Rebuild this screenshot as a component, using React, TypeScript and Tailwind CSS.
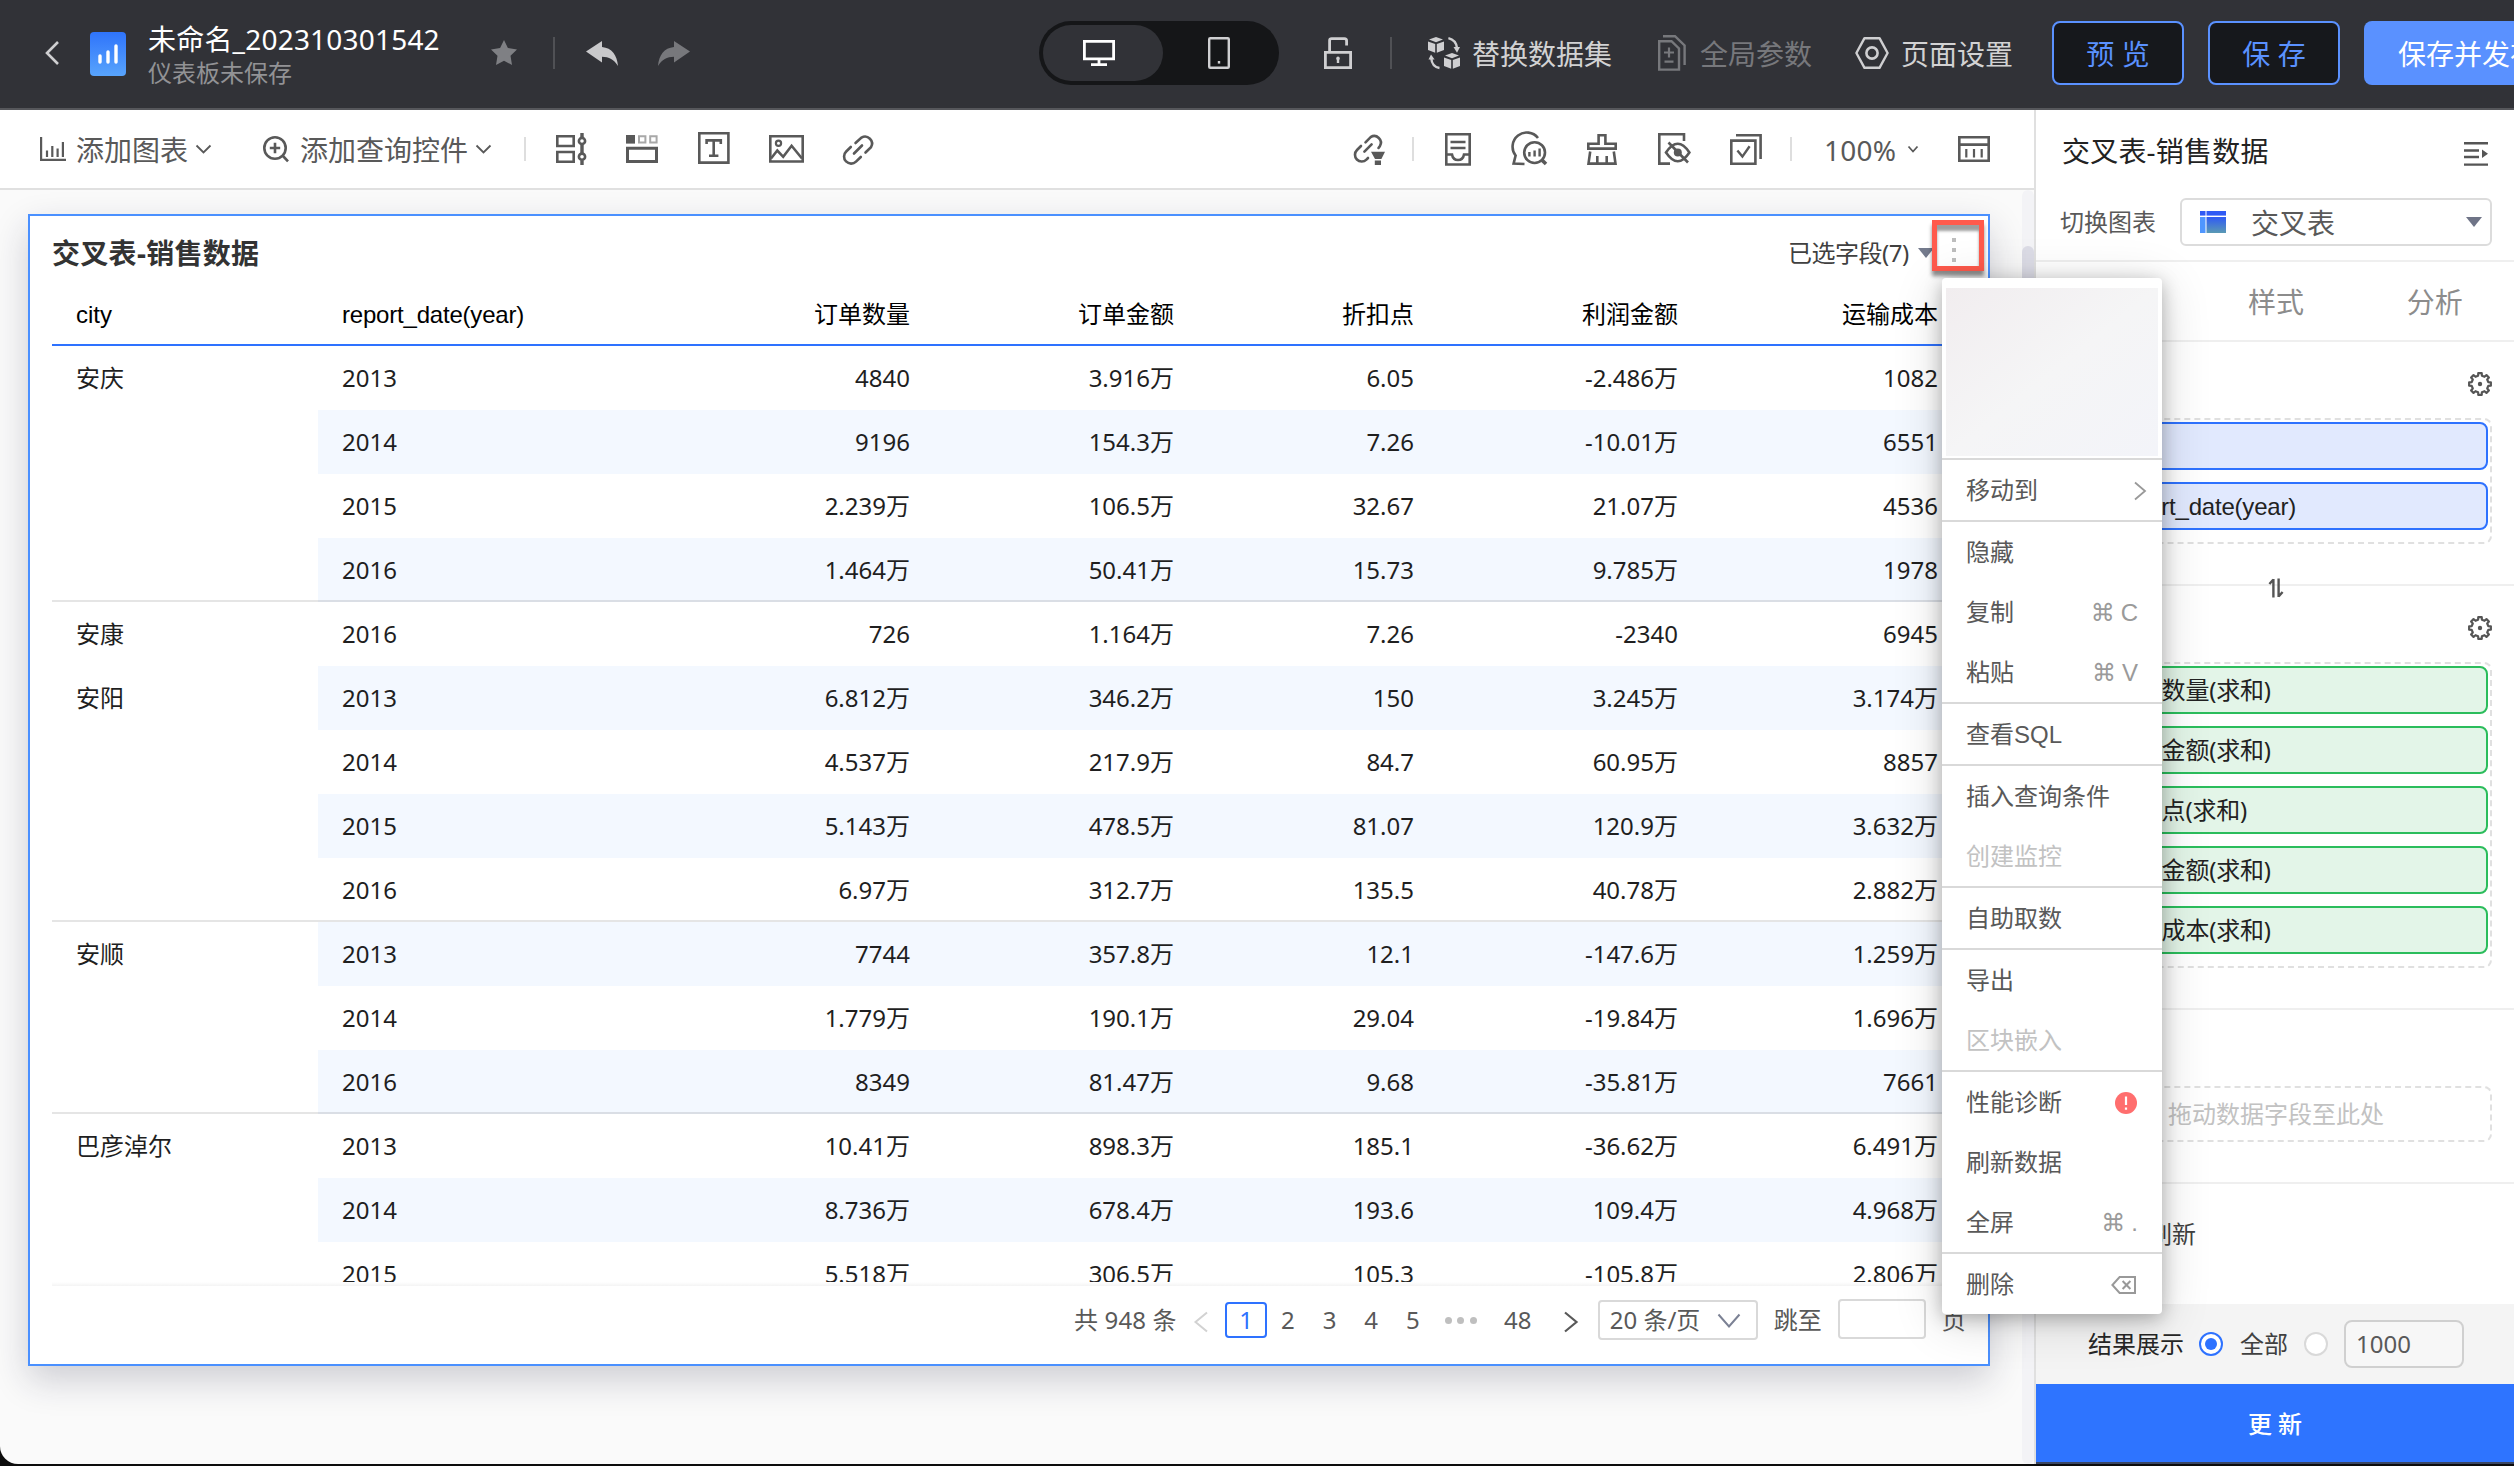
import React from "react";

type SvgProps = { w: number; h: number; sw?: number; className?: string; children: React.ReactNode };

function Svg({ w, h, sw = 2.6, className = "", children }: SvgProps) {
  return (
    <svg
      width={w}
      height={h}
      viewBox={`0 0 ${w} ${h}`}
      fill="none"
      stroke="currentColor"
      strokeWidth={sw}
      className={`block shrink-0 overflow-visible ${className}`}
    >
      {children}
    </svg>
  );
}

const ChevronDown = ({ w, h, sw = 1.8, className }: { w: number; h: number; sw?: number; className?: string }) => (
  <Svg w={w} h={h} sw={sw} className={className}>
    <path d={`M0.5 0.5 L${w / 2} ${h - 0.5} L${w - 0.5} 0.5`} />
  </Svg>
);

const LinkShape = () => (
  <g strokeLinecap="round">
    <path d="M12.5 9 L18.5 3.6 A7 7 0 0 1 28 13.2 L22.5 18.5" />
    <path d="M7.8 13 L3.2 17.5 A7 7 0 0 0 13 27.6 L17.8 23" />
    <path d="M11 19.5 L19 11.5" />
  </g>
);

function Header() {
  return (
    <header className="flex h-[110px] shrink-0 items-center overflow-hidden border-b-2 border-[#56575b] bg-[#313237] text-[28px] leading-[36px] text-[#d2d2d3]">
      <Svg w={14} h={24} sw={2.6} className="mt-[-2px] ml-[45px] text-[#cfcfd1]">
        <path d="M13 1 L2 12 L13 23" />
      </Svg>
      <svg width="36" height="44" viewBox="0 0 36 44" className="ml-[31px] mt-[-1px] block shrink-0">
        <defs>
          <linearGradient id="logo" x1="0" y1="0" x2="0" y2="1">
            <stop offset="0" stopColor="#2f74fb" />
            <stop offset="1" stopColor="#58a4fc" />
          </linearGradient>
        </defs>
        <rect width="36" height="44" rx="4" fill="url(#logo)" />
        <g stroke="#fff" strokeWidth="3.4" strokeLinecap="round">
          <path d="M10 24 V30" />
          <path d="M18 20 V30" />
          <path d="M26 14 V30" />
        </g>
      </svg>
      <div className="ml-[22px] flex w-[320px] shrink-0 flex-col pt-[1px]">
        <div className="text-[28px] leading-[36px] tracking-[0.2px] whitespace-nowrap text-white">未命名_202310301542</div>
        <div className="text-[24px] leading-[32px] whitespace-nowrap text-[#929295]">仪表板未保存</div>
      </div>
      <Svg w={26} h={25} sw={0} className="mt-[-3px] ml-[23px] text-[#7f8084]">
        <path
          fill="currentColor"
          d="M13 0 L16.9 8 L26 9.4 L19.5 15.8 L21 25 L13 20.7 L5 25 L6.5 15.8 L0 9.4 L9.1 8 Z"
        />
      </Svg>
      <div className="mt-[-2px] ml-[36px] h-8 w-[2px] shrink-0 bg-[#505155]" />
      <Svg w={32} h={25} sw={0} className="mt-[-2px] ml-[31px] text-[#c9c9cb]">
        <path fill="currentColor" d="M0 10.5 L16 0 V6 C26 7 31 14 32 25 C28 18.5 23 16 16 15.8 V21.5 Z" />
      </Svg>
      <Svg w={32} h={25} sw={0} className="mt-[-2px] ml-[40px] text-[#77787c]">
        <path fill="currentColor" d="M32 10.5 L16 0 V6 C6 7 1 14 0 25 C4 18.5 9 16 16 15.8 V21.5 Z" />
      </Svg>
      <div className="mt-[-2px] ml-[349px] flex h-16 w-[240px] shrink-0 items-center rounded-full bg-[#151618] p-1">
        <div className="flex h-14 w-[120px] items-center justify-center rounded-full bg-[#313237] pr-[9px] text-white">
          <Svg w={32} h={26} sw={2.8}>
            <path d="M1.4 1.4 H30.6 V18.8 H1.4 Z M16 19 V24.5 M8 24.6 H24" />
          </Svg>
        </div>
        <div className="flex h-14 w-[112px] items-center justify-center text-[#cfcfd1]">
          <Svg w={22} h={32} sw={2.4}>
            <rect x="1.2" y="1.2" width="19.6" height="29.6" rx="1" />
            <path d="M11 24 V26.6" />
          </Svg>
        </div>
      </div>
      <Svg w={28} h={32} sw={2.8} className="mt-[-2px] ml-[45px] text-[#cfcfd1]">
        <path d="M1.4 15.4 H26.6 V30.6 H1.4 Z M5.6 15 V3.6 Q5.6 1.6 7.6 1.6 H20.4 Q22.6 1.6 22.6 3.8 V8.5" />
        <path d="M14 21 V26" strokeWidth="2.4" />
        <circle cx="14" cy="21.4" r="1" strokeWidth="1.6" />
      </Svg>
      <div className="mt-[-2px] ml-[38px] h-8 w-[2px] shrink-0 bg-[#505155]" />
      <Svg w={32} h={32} sw={2.4} className="mt-[-2px] ml-[36px] text-[#cfcfd1]">
        <g fill="currentColor" stroke="none">
          <path d="M8 0 L15 2.6 L8 5.2 L1 2.6 Z" />
          <path d="M0 4.4 L7.2 7 V15.8 L0 13 Z" />
          <path d="M16 4.4 L8.8 7 V15.8 L16 13 Z" />
          <path d="M24 16 L31 18.6 L24 21.2 L17 18.6 Z" />
          <path d="M16 20.4 L23.2 23 V31.8 L16 29 Z" />
          <path d="M32 20.4 L24.8 23 V31.8 L32 29 Z" />
          <path d="M25.5 10 H32 L29 15.8 Z" />
          <path d="M0.5 22.5 H6.6 L3 17.5 Z" />
        </g>
        <path d="M20.4 1.2 Q28 3 29 11" />
        <path d="M3.2 21 Q4 30 11.5 31" />
      </Svg>
      <div className="mt-[-1px] ml-[12px] w-[140px] shrink-0 whitespace-nowrap">替换数据集</div>
      <Svg w={28} h={36} sw={2.4} className="mt-[-2px] ml-[46px] text-[#77787c]">
        <path d="M1.2 6.2 H13.5 L21 13.5 V34.6 H1.2 Z M5 1.2 H17 L26.6 10.5 V30" />
        <path d="M6 17.5 H16 M11 12.5 V22.5 M6.5 26.6 H15.5" strokeWidth="2.2" />
      </Svg>
      <div className="mt-[-1px] ml-[14px] w-[112px] shrink-0 whitespace-nowrap text-[#77787c]">全局参数</div>
      <Svg w={34} h={32} sw={2.4} className="mt-[-2px] ml-[43px] text-[#cfcfd1]">
        <path d="M9.5 1.2 H24.5 L32.6 16 L24.5 30.8 H9.5 L1.4 16 Z" strokeLinejoin="round" />
        <circle cx="17" cy="16" r="5.6" strokeWidth="2.6" />
      </Svg>
      <div className="mt-[-1px] ml-[12px] w-[112px] shrink-0 whitespace-nowrap">页面设置</div>
      <button className="mt-[-2px] ml-[39px] flex h-16 w-[132px] shrink-0 items-center justify-center rounded-[8px] border-2 border-[#5a91ff] bg-[#16181c] pt-[1px] whitespace-pre text-[#5a91ff]">
        预 览
      </button>
      <button className="mt-[-2px] ml-[24px] flex h-16 w-[132px] shrink-0 items-center justify-center rounded-[8px] border-2 border-[#5a91ff] bg-[#16181c] pt-[1px] whitespace-pre text-[#5a91ff]">
        保 存
      </button>
      <button className="mt-[-2px] ml-[24px] flex h-16 w-[208px] shrink-0 items-center justify-center rounded-[8px] bg-[#5a91ff] pt-[1px] whitespace-nowrap text-white">
        保存并发布
      </button>
    </header>
  );
}

function Toolbar() {
  return (
    <div className="flex h-[80px] shrink-0 items-center border-b-2 border-[#e0e0e0] bg-white text-[28px] leading-[36px] text-[#595959]">
      <Svg w={26} h={24} sw={2.2} className="ml-[40px]">
        <path d="M1.1 0 V22.9 H26 M7 20 V13.5 M12.3 20 V9 M17.6 20 V11.5 M22.9 20 V5" />
      </Svg>
      <div className="mt-[1px] ml-[10px] w-[112px] shrink-0 whitespace-nowrap">添加图表</div>
      <ChevronDown w={15} h={8} className="ml-[8px]" />
      <Svg w={26} h={27} sw={2.6} className="ml-[52px]">
        <circle cx="12" cy="12" r="10.7" />
        <path d="M12 6.8 V17.2 M6.8 12 H17.2 M19.5 19.5 L25 25.4" />
      </Svg>
      <div className="mt-[1px] ml-[11px] w-[168px] shrink-0 whitespace-nowrap">添加查询控件</div>
      <ChevronDown w={15} h={8} className="ml-[8px]" />
      <div className="ml-[33px] h-6 w-[2px] shrink-0 bg-[#dedede]" />
      <Svg w={30} h={32} className="ml-[30px]">
        <path d="M1.3 3.3 H17.7 V13 H1.3 Z M1.3 19 H17.7 V28.8 H1.3 Z" />
        <path d="M26 0 V4.5 M26 12 V20 M26 27.5 V32" strokeWidth="3.4" />
        <circle cx="26" cy="8" r="3.1" />
        <circle cx="26" cy="23.7" r="3.1" />
      </Svg>
      <Svg w={32} h={28} className="ml-[40px]">
        <rect width="9" height="8.6" fill="currentColor" stroke="none" />
        <path d="M13 1.2 H19.4 V7.4 H13 Z M24.2 1.2 H30.6 V7.4 H24.2 Z" stroke="#a8a8a8" strokeWidth="2" />
        <path d="M1.5 13.3 H30.5 V26.5 H1.5 Z" strokeWidth="3" />
      </Svg>
      <Svg w={32} h={32} className="mt-[-2px] ml-[40px]">
        <path d="M1.3 1.3 H30.4 V30.6 H1.3 Z" />
        <path d="M8.6 12 V8.4 H22.8 V12 M15.7 8.4 V23.6 M11 23.8 H20.4" strokeWidth="2.6" />
      </Svg>
      <Svg w={35} h={28} className="ml-[39px]">
        <path d="M1.3 1.3 H33.7 V26.5 H1.3 Z" />
        <circle cx="9.5" cy="8.2" r="2.6" strokeWidth="2.2" />
        <path d="M2 23.5 L8.3 15.5 L14.2 21.8 L22.6 10.8 L33 23.5" />
      </Svg>
      <Svg w={31} h={31} className="ml-[39px]">
        <LinkShape />
      </Svg>
      <Svg w={31} h={31} className="ml-[480px]">
        <g strokeLinecap="round">
          <path d="M11.5 8.4 L16.6 3.2 A6.6 6.6 0 0 1 25.8 12.2 L24.5 14" />
          <path d="M7 12 L3 16 A6.6 6.6 0 0 0 12.4 25.6 L14 24" />
          <path d="M10.4 17.6 L17.6 10.4" />
        </g>
        <path d="M17 17.8 H31 L27.4 25 H21 Z M20.8 26.6 H27 V31 H20.8 Z" fill="currentColor" stroke="none" />
      </Svg>
      <div className="ml-[27px] h-6 w-[2px] shrink-0 bg-[#dedede]" />
      <Svg w={26} h={33} className="ml-[31px]">
        <path d="M1.3 1.3 H24.7 V31.5 H1.3 Z M5.5 9 H20.5 M5.5 15 H20.5" />
        <path d="M1.3 21.5 H7 Q8 27 13 27 Q18 27 19 21.5 H24.7" />
      </Svg>
      <Svg w={35} h={31} className="ml-[41px]">
        <path d="M26 4 A14 14 0 0 0 3.6 21.5 L1.6 29.6 L12.5 30" />
        <circle cx="22.6" cy="18.6" r="10.4" />
        <path d="M17.4 18 V22.6 M22.6 16.4 V22.6 M27.6 14.4 V22.6" strokeWidth="2.4" />
        <path d="M29.5 25.6 L34 30" strokeWidth="3.6" />
      </Svg>
      <Svg w={30} h={31} className="ml-[40px]">
        <path d="M1.3 14.6 V9.8 H11.6 V1.3 H18.4 V9.8 H28.7 V14.6 Z" />
        <path d="M3.2 17.5 L1.5 29.6 H28.5 L26.8 17.5 M10.3 22 V29 M19.7 22 V29" />
      </Svg>
      <Svg w={33} h={32} className="ml-[41px]">
        <path d="M26 8 V1.3 H1.3 V30.6 H12" />
        <path d="M8 19.5 Q19.8 2 31.4 19.5 Q19.8 37 8 19.5 Z" />
        <circle cx="19.8" cy="19.5" r="4" fill="currentColor" stroke="none" />
        <path d="M10.5 9.5 L30 29.5" />
      </Svg>
      <Svg w={32} h={31} className="ml-[39px]">
        <path d="M1.3 6.6 H25.4 V29.7 H1.3 Z M6 1.3 H30.6 V25" />
        <path d="M7.4 16.6 L12.4 22.6 L19.6 12.2" strokeWidth="2.4" />
      </Svg>
      <div className="ml-[28px] h-6 w-[2px] shrink-0 bg-[#dedede]" />
      <div className="mt-[1px] ml-[32px] w-[75px] shrink-0 tracking-[0.2px] whitespace-nowrap">100%</div>
      <ChevronDown w={10} h={6} className="ml-[9px]" />
      <Svg w={32} h={26} className="ml-[40px]">
        <path d="M1.3 1.3 H30.7 V24.7 H1.3 Z M1.3 8.6 H30.7" />
        <path d="M8.3 13 V21.5 M16 13 V21.5 M23.7 13 V21.5" strokeWidth="2.2" />
      </Svg>
    </div>
  );
}

type Row = { city?: string; cells: string[]; line?: boolean };

const ROWS: Row[] = [
  { city: "安庆", cells: ["2013", "4840", "3.916万", "6.05", "-2.486万", "1082"] },
  { cells: ["2014", "9196", "154.3万", "7.26", "-10.01万", "6551"] },
  { cells: ["2015", "2.239万", "106.5万", "32.67", "21.07万", "4536"] },
  { cells: ["2016", "1.464万", "50.41万", "15.73", "9.785万", "1978"], line: true },
  { city: "安康", cells: ["2016", "726", "1.164万", "7.26", "-2340", "6945"] },
  { city: "安阳", cells: ["2013", "6.812万", "346.2万", "150", "3.245万", "3.174万"] },
  { cells: ["2014", "4.537万", "217.9万", "84.7", "60.95万", "8857"] },
  { cells: ["2015", "5.143万", "478.5万", "81.07", "120.9万", "3.632万"] },
  { cells: ["2016", "6.97万", "312.7万", "135.5", "40.78万", "2.882万"], line: true },
  { city: "安顺", cells: ["2013", "7744", "357.8万", "12.1", "-147.6万", "1.259万"] },
  { cells: ["2014", "1.779万", "190.1万", "29.04", "-19.84万", "1.696万"] },
  { cells: ["2016", "8349", "81.47万", "9.68", "-35.81万", "7661"], line: true },
  { city: "巴彦淖尔", cells: ["2013", "10.41万", "898.3万", "185.1", "-36.62万", "6.491万"] },
  { cells: ["2014", "8.736万", "678.4万", "193.6", "109.4万", "4.968万"] },
  { cells: ["2015", "5.518万", "306.5万", "105.3", "-105.8万", "2.806万"] },
];

function DataTable() {
  return (
    <div className="ml-[22px] w-[1910px] text-[24px] leading-[32px]">
      <div className="grid h-[60px] grid-cols-[266px_352px_264px_264px_240px_264px_260px] items-center border-b-2 border-[#2e72ff] font-['Liberation_Sans','Noto_Sans_CJK_SC',sans-serif] text-black">
        <div className="pl-6">city</div>
        <div className="pl-6 tracking-[-0.2px]">report_date(year)</div>
        {["订单数量", "订单金额", "折扣点", "利润金额", "运输成本"].map((t) => (
          <div key={t} className="pr-6 text-right">
            {t}
          </div>
        ))}
      </div>
      <div className="h-[936px] overflow-hidden text-[#1f1f1f]">
        {ROWS.map((r, i) => (
          <div key={i} className="grid h-16 grid-cols-[266px_1644px]">
            <div className={`flex items-center pl-6 ${r.line ? "border-b-2 border-black/10" : ""}`}>{r.city}</div>
            <div
              className={`grid grid-cols-[352px_264px_264px_240px_264px_260px] items-center ${i % 2 ? "bg-[#f3f8ff]" : ""} ${r.line ? "border-b-2 border-black/10 pt-[2px]" : ""}`}
            >
              {r.cells.map((c, j) => (
                <div key={j} className={j === 0 ? "pl-6" : "pr-6 text-right"}>
                  {c}
                </div>
              ))}
            </div>
          </div>
        ))}
      </div>
      <div className="h-1 bg-gradient-to-b from-white to-[#f4f4f4]" />
    </div>
  );
}

function Pagination() {
  return (
    <div className="ml-[1044px] flex h-[68px] items-center text-[24px] leading-[32px] text-[#595959]">
      <div className="w-[104px] shrink-0 tracking-[0.15px] whitespace-nowrap">共 948 条</div>
      <Svg w={14} h={20} sw={2} className="mt-1 ml-[16px] text-[#d2d2d2]">
        <path d="M13 0.5 L1.5 10 L13 19.5" />
      </Svg>
      <div className="ml-[17px] flex h-9 w-[42px] shrink-0 items-center justify-center rounded-[4px] border-2 border-[#2e72ff] text-[#2e72ff]">
        1
      </div>
      {["2", "3", "4", "5"].map((n) => (
        <div key={n} className="w-[41.7px] shrink-0 text-center">
          {n}
        </div>
      ))}
      <div className="ml-[11px] flex w-[32px] shrink-0 justify-between">
        <span className="size-[7px] rounded-full bg-[#bfbfbf]" />
        <span className="size-[7px] rounded-full bg-[#bfbfbf]" />
        <span className="size-[7px] rounded-full bg-[#bfbfbf]" />
      </div>
      <div className="ml-[27px] w-[28px] shrink-0 text-center">48</div>
      <Svg w={14} h={20} sw={2.2} className="mt-1 ml-[32px]">
        <path d="M1 0.5 L12.5 10 L1 19.5" />
      </Svg>
      <div className="ml-[20px] flex h-10 w-[160px] shrink-0 items-center rounded-[4px] border-2 border-[#d9d9d9] pl-[10px]">
        <div className="w-[92px] whitespace-nowrap">20 条/页</div>
        <ChevronDown w={22} h={13} sw={2} className="ml-[16px] text-[#7b8194]" />
      </div>
      <div className="ml-[16px] w-12 shrink-0">跳至</div>
      <div className="mt-[-3px] ml-[16px] h-10 w-[88px] shrink-0 rounded-[4px] border-2 border-[#d9d9d9] bg-white" />
      <div className="ml-[16px] w-6 shrink-0">页</div>
    </div>
  );
}

function Canvas() {
  return (
    <div className="flex h-[1274px] w-[2034px] bg-[#fafafa]">
      <div className="w-[2022px] pt-[24px] pl-[28px]">
        <section className="relative h-[1152px] w-[1962px] border-2 border-[#4a90ff] bg-white shadow-[0_14px_34px_rgba(30,30,60,0.2)]">
          <div className="flex h-[70px] items-center pt-[4px] pl-[22px]">
            <h1 className="w-[230px] text-[28px] leading-[36px] font-bold tracking-[0.3px] whitespace-nowrap text-[#333]">
              交叉表-销售数据
            </h1>
            <div className="ml-[1506px] w-[122px] text-[24px] leading-[32px] tracking-[-0.5px] whitespace-nowrap text-[#404040]">
              已选字段(7)
            </div>
            <Svg w={16} h={10} sw={0} className="ml-[8px] text-[#737a8c]">
              <path d="M0 0 H16 L8 10 Z" fill="currentColor" />
            </Svg>
          </div>
          <DataTable />
          <Pagination />
          <div className="absolute top-[4px] left-[1902px] flex h-[51px] w-[52px] flex-col items-center justify-center gap-[6px] border-[5px] border-[#ff5a4c] pt-[8px] pr-[8px] shadow-[0_5px_4px_rgba(0,0,0,0.45),inset_0_6px_3px_rgba(0,0,0,0.38)]">
            <i className="size-1 bg-[#bdbdbd]" />
            <i className="size-1 bg-[#bdbdbd]" />
            <i className="size-1 bg-[#bdbdbd]" />
          </div>
        </section>
      </div>
      <div className="w-3 rounded-full bg-[#f3f3f6] pt-[56px]">
        <div className="h-[640px] w-3 rounded-full bg-[#dcdce6]" />
      </div>
    </div>
  );
}

/* Cog outline with eight square teeth around a 24px box. */
const COG = Array.from({ length: 8 }, (_, i) => {
  const points: [number, number][] = [
    [8.5, -13],
    [11, -9],
    [11, 9],
    [8.5, 13],
  ];
  return points
    .map(([r, a]) => {
      const t = ((i * 45 + a) * Math.PI) / 180;
      return `${(12 + r * Math.cos(t)).toFixed(2)} ${(12 + r * Math.sin(t)).toFixed(2)}`;
    })
    .join(" L");
}).join(" L");

const Gear = () => (
  <Svg w={24} h={24} sw={2.2}>
    <path strokeLinejoin="round" d={`M${COG} Z`} />
    <circle cx="12" cy="12" r="2.2" fill="currentColor" stroke="none" />
  </Svg>
);

function Sidebar() {
  const dashed = "ml-[20px] w-[436px] rounded-[8px] border-2 border-dashed border-[#e0e0e0]";
  return (
    <aside className="flex h-[1354px] w-[480px] shrink-0 flex-col border-l-2 border-[#e0e0e0] bg-white text-[24px] leading-[32px]">
      <div className="flex h-[82px] items-center pl-[26px] text-[28px] leading-[36px] text-[#222]">
        <div className="w-[402px] shrink-0 tracking-[0.2px] whitespace-nowrap">交叉表-销售数据</div>
        <Svg w={24} h={24} sw={2.4} className="mt-[6px] text-[#555]">
          <path d="M0 1.3 H24 M0 8.5 H15 M0 15 H15 M0 22.6 H24" />
          <path d="M18 7.5 L24 11.8 L18 16 Z" fill="currentColor" stroke="none" />
        </Svg>
      </div>
      <div className="flex h-[70px] items-start border-b-2 border-[#efefef] pt-[6px] pl-[24px] text-[#595959]">
        <div className="mt-[8px] w-[120px] shrink-0 whitespace-nowrap">切换图表</div>
        <div className="flex h-12 w-[312px] items-center rounded-[6px] border-2 border-[#dcdcdc] pl-[18px] text-[28px] leading-[36px]">
          <svg width="26" height="22" viewBox="0 0 26 22" className="block">
            <defs>
              <linearGradient id="pivot" x1="0" y1="0" x2="0" y2="1">
                <stop offset="0" stopColor="#2f5af5" />
                <stop offset="1" stopColor="#5a9ab4" />
              </linearGradient>
            </defs>
            <rect width="5.5" height="4.6" fill="#2f5af5" />
            <rect x="6.5" width="19.5" height="4.6" fill="#2f5af5" />
            <rect y="6" width="5.5" height="16" fill="#4f96ff" />
            <rect x="6.5" y="6" width="19.5" height="16" fill="url(#pivot)" />
          </svg>
          <div className="mt-[2px] ml-[25px] w-[215px] shrink-0">交叉表</div>
          <Svg w={16} h={10} sw={0} className="text-[#6f7487]">
            <path d="M0 0 H16 L8 10 Z" fill="currentColor" />
          </Svg>
        </div>
      </div>
      <div className="grid h-[80px] shrink-0 grid-cols-3 items-center border-b-2 border-[#efefef] pt-[2px] pl-[2px] text-center text-[28px] leading-[36px] text-[#8c8c8c]">
        <div>数据</div>
        <div>样式</div>
        <div>分析</div>
      </div>

      <div className="flex h-[76px] shrink-0 items-center justify-between pt-[8px] pr-[22px] pl-[26px] text-[#555]">
        <span>行</span>
        <Gear />
      </div>
      <div className={`${dashed} flex h-[126px] shrink-0 flex-col gap-3 p-[2px] font-['Liberation_Sans',sans-serif] text-[#222]`}>
        {["city", "report_date(year)"].map((t) => (
          <div
            key={t}
            className="flex h-12 shrink-0 items-center rounded-[8px] border-2 border-[#2e72ff] bg-[#e1e9fe] pt-[1px] pl-[52px] tracking-[-0.2px]"
          >
            {t}
          </div>
        ))}
      </div>
      <div className="relative h-[42px] shrink-0 border-b-2 border-[#efefef]">
        <Svg w={14} h={20} sw={2.4} className="absolute top-[34px] left-[233px] text-[#555]">
          <path d="M4.4 19.5 V1 M0.4 6 L4.4 1.5 M9.6 0.5 V19 M13.6 14 L9.6 18.5" />
        </Svg>
      </div>
      <div className="flex h-[76px] shrink-0 items-center justify-between pt-[8px] pr-[22px] pl-[26px] text-[#555]">
        <span>列</span>
        <Gear />
      </div>
      <div className={`${dashed} flex h-[306px] shrink-0 flex-col gap-3 p-[2px] text-[#222]`}>
        {["订单数量(求和)", "订单金额(求和)", "折扣点(求和)", "利润金额(求和)", "运输成本(求和)"].map((t) => (
          <div
            key={t}
            className="flex h-12 shrink-0 items-center rounded-[8px] border-2 border-[#2bbd5c] bg-[#e3f5e8] pl-[52px] tracking-[-0.2px]"
          >
            {t}
          </div>
        ))}
      </div>
      <div className="h-[42px] shrink-0 border-b-2 border-[#efefef]" />
      <div className="flex h-[76px] shrink-0 items-center pl-[26px] text-[#555]">过滤器</div>
      <div className={`${dashed} flex h-[56px] shrink-0 items-center pl-[110px] text-[#c2c2c2]`}>拖动数据字段至此处</div>
      <div className="h-[42px] shrink-0 border-b-2 border-[#efefef]" />
      <div className="flex h-[120px] shrink-0 items-start pt-[34px] pl-[64px] text-[#404040]">自动刷新</div>
      <div className="flex h-[80px] shrink-0 items-center bg-[#f4f4f4] pl-[52px] text-[#404040]">
        <div className="w-[96px] shrink-0 text-[#262626]">结果展示</div>
        <div className="ml-[15px] flex size-6 shrink-0 items-center justify-center rounded-full border-2 border-[#2e72ff] bg-white">
          <div className="size-3 rounded-full bg-[#2e72ff]" />
        </div>
        <div className="ml-[17px] w-12 shrink-0">全部</div>
        <div className="ml-[16px] size-6 shrink-0 rounded-full border-2 border-[#d9d9d9] bg-white" />
        <div className="ml-[16px] flex h-12 w-[120px] shrink-0 items-center rounded-[8px] border-2 border-[#d0d0d0] bg-[#f7f7f7] pl-[10px] text-[#595959]">
          1000
        </div>
      </div>
      <div className="flex h-[80px] shrink-0 items-center justify-center border-b-2 border-[#3a4663] bg-[#2e74ff] pt-[2px] font-medium whitespace-pre text-white">
        更 新
      </div>
    </aside>
  );
}

type Item = { label: string; off?: boolean; right?: React.ReactNode };

const Keys = ({ k }: { k: string }) => (
  <span className="flex items-center gap-[6px] font-['Liberation_Sans',sans-serif] text-[#9a9a9a]">
    <span className="font-['DejaVu_Sans',sans-serif] text-[24px]">⌘</span>
    {k}
  </span>
);

const GROUPS: Item[][] = [
  [
    {
      label: "移动到",
      right: (
        <Svg w={12} h={18} sw={1.8} className="mr-[-8px] text-[#999]">
          <path d="M1 0.5 L11 9 L1 17.5" />
        </Svg>
      ),
    },
  ],
  [{ label: "隐藏" }, { label: "复制", right: <Keys k="C" /> }, { label: "粘贴", right: <Keys k="V" /> }],
  [{ label: "查看SQL" }],
  [{ label: "插入查询条件" }, { label: "创建监控", off: true }],
  [{ label: "自助取数" }],
  [{ label: "导出" }, { label: "区块嵌入", off: true }],
  [
    {
      label: "性能诊断",
      right: (
        <svg width="22" height="22" viewBox="0 0 22 22" className="mr-px block">
          <circle cx="11" cy="11" r="11" fill="#ff6e6e" />
          <path d="M11 4.6 V13 M11 15.4 V17.8" stroke="#fff" strokeWidth="2.2" />
        </svg>
      ),
    },
    { label: "刷新数据" },
    { label: "全屏", right: <Keys k="." /> },
  ],
  [
    {
      label: "删除",
      right: (
        <Svg w={25} h={18} sw={2} className="mr-[2px] text-[#999]">
          <path d="M8.6 1 H24 V17 H8.6 L1.4 9 Z M11.6 5 L19.4 13 M19.4 5 L11.6 13" />
        </Svg>
      ),
    },
  ],
];

function ContextMenu() {
  return (
    <div className="absolute top-[278px] left-[1942px] h-[1036px] w-[220px] rounded-[4px] bg-white text-[24px] leading-[32px] text-[#595959] shadow-[0_8px_50px_rgba(0,0,0,0.16),0_4px_18px_rgba(0,0,0,0.26)]">
      <div className="h-[180px] px-1 pt-[10px]">
        <div className="h-[168px] bg-gradient-to-br from-[#f1edef] via-[#f5f5f6] to-[#f3f4f9]" />
      </div>
      {GROUPS.map((g, i) => (
        <div key={i} className="border-t-2 border-[#d9d9d9]">
          {g.map((it) => (
            <div key={it.label} className={`flex h-[60px] items-center justify-between px-6 pt-[2px] ${it.off ? "text-[#c2c2c2]" : ""}`}>
              <span className="font-['Liberation_Sans','Noto_Sans_CJK_SC',sans-serif] whitespace-nowrap">{it.label}</span>
              {it.right}
            </div>
          ))}
        </div>
      ))}
    </div>
  );
}

export default function App() {
  return (
    <div className="relative h-[1466px] w-[2514px] overflow-hidden bg-[#0c0c0c] font-['Noto_Sans','Noto_Sans_CJK_SC',sans-serif]">
      <div className="flex h-[1464px] flex-col overflow-hidden rounded-bl-[18px]">
        <Header />
        <div className="flex">
          <div className="flex w-[2034px] shrink-0 flex-col">
            <Toolbar />
            <Canvas />
          </div>
          <Sidebar />
        </div>
      </div>
      <ContextMenu />
    </div>
  );
}
